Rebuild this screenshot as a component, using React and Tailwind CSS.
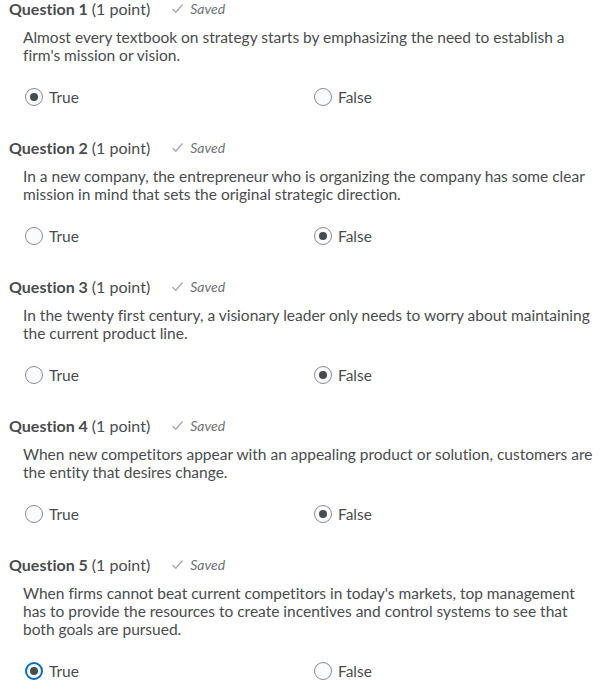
import React, { useState } from "react";

const questions = [
  {
    n: 1,
    text: "Almost every textbook on strategy starts by emphasizing the need to establish a firm's mission or vision.",
    answer: "True",
  },
  {
    n: 2,
    text: "In a new company, the entrepreneur who is organizing the company has some clear mission in mind that sets the original strategic direction.",
    answer: "False",
  },
  {
    n: 3,
    text: "In the twenty first century, a visionary leader only needs to worry about maintaining the current product line.",
    answer: "False",
  },
  {
    n: 4,
    text: "When new competitors appear with an appealing product or solution, customers are the entity that desires change.",
    answer: "False",
  },
  {
    n: 5,
    text: "When firms cannot beat current competitors in today's markets, top management has to provide the resources to create incentives and control systems to see that both goals are pursued.",
    answer: "True",
    focus: true,
  },
];

const Radio = ({ checked, focus }) => (
  <span
    className={
      "w-[18px] h-[18px] rounded-full border flex items-center justify-center bg-[#f9fbff] " +
      (focus ? "border-[#006fbf] border-2" : "border-[#868c90]")
    }
  >
    {checked && <span className="w-[8px] h-[8px] rounded-full bg-[#494c4e]" />}
  </span>
);

const Question = ({ q, value, onChange }) => (
  <div className="mb-[33px]">
    {/* heading */}
    <div className="flex items-center h-[17px] pl-[9px] text-[16px] leading-[17px] text-[#494c4e]">
      <span className="font-bold">Question {q.n}</span>
      <span className="ml-[4px]">(1 point)</span>
      <span className="ml-[21px] flex items-center text-[14px] italic text-[#6e7376]">
        <svg width="13" height="11" viewBox="0 0 13 11" className="mr-[6px]">
          <path d="M1.5 6 L4.8 9.2 L11.5 1.5" fill="none" stroke="#a3a9ad" strokeWidth="1.3" />
        </svg>
        Saved
      </span>
    </div>

    {/* text */}
    <p className="mt-[11px] pl-[23px] w-[596px] text-[15.5px] leading-[18px] text-[#494c4e]">{q.text}</p>

    {/* options */}
    <div className="mt-[24px] ml-[25px] grid grid-cols-[289px_289px] text-[15.5px] leading-[18px] text-[#494c4e]">
      {["True", "False"].map((opt) => (
        <label key={opt} className="flex items-center gap-[6px] h-[18px] cursor-pointer" onClick={() => onChange(opt)}>
          <Radio checked={value === opt} focus={q.focus && value === opt} />
          <span>{opt}</span>
        </label>
      ))}
    </div>
  </div>
);

export default function App() {
  const [answers, setAnswers] = useState(
    Object.fromEntries(questions.map((q) => [q.n, q.answer]))
  );

  return (
    <div
      className="w-[602px] h-[699px] overflow-hidden bg-white [font-variant-ligatures:none]"
      style={{ fontFamily: "Lato, 'Liberation Sans', sans-serif" }}
    >
      {questions.map((q) => (
        <Question
          key={q.n}
          q={q}
          value={answers[q.n]}
          onChange={(v) => setAnswers({ ...answers, [q.n]: v })}
        />
      ))}
    </div>
  );
}
